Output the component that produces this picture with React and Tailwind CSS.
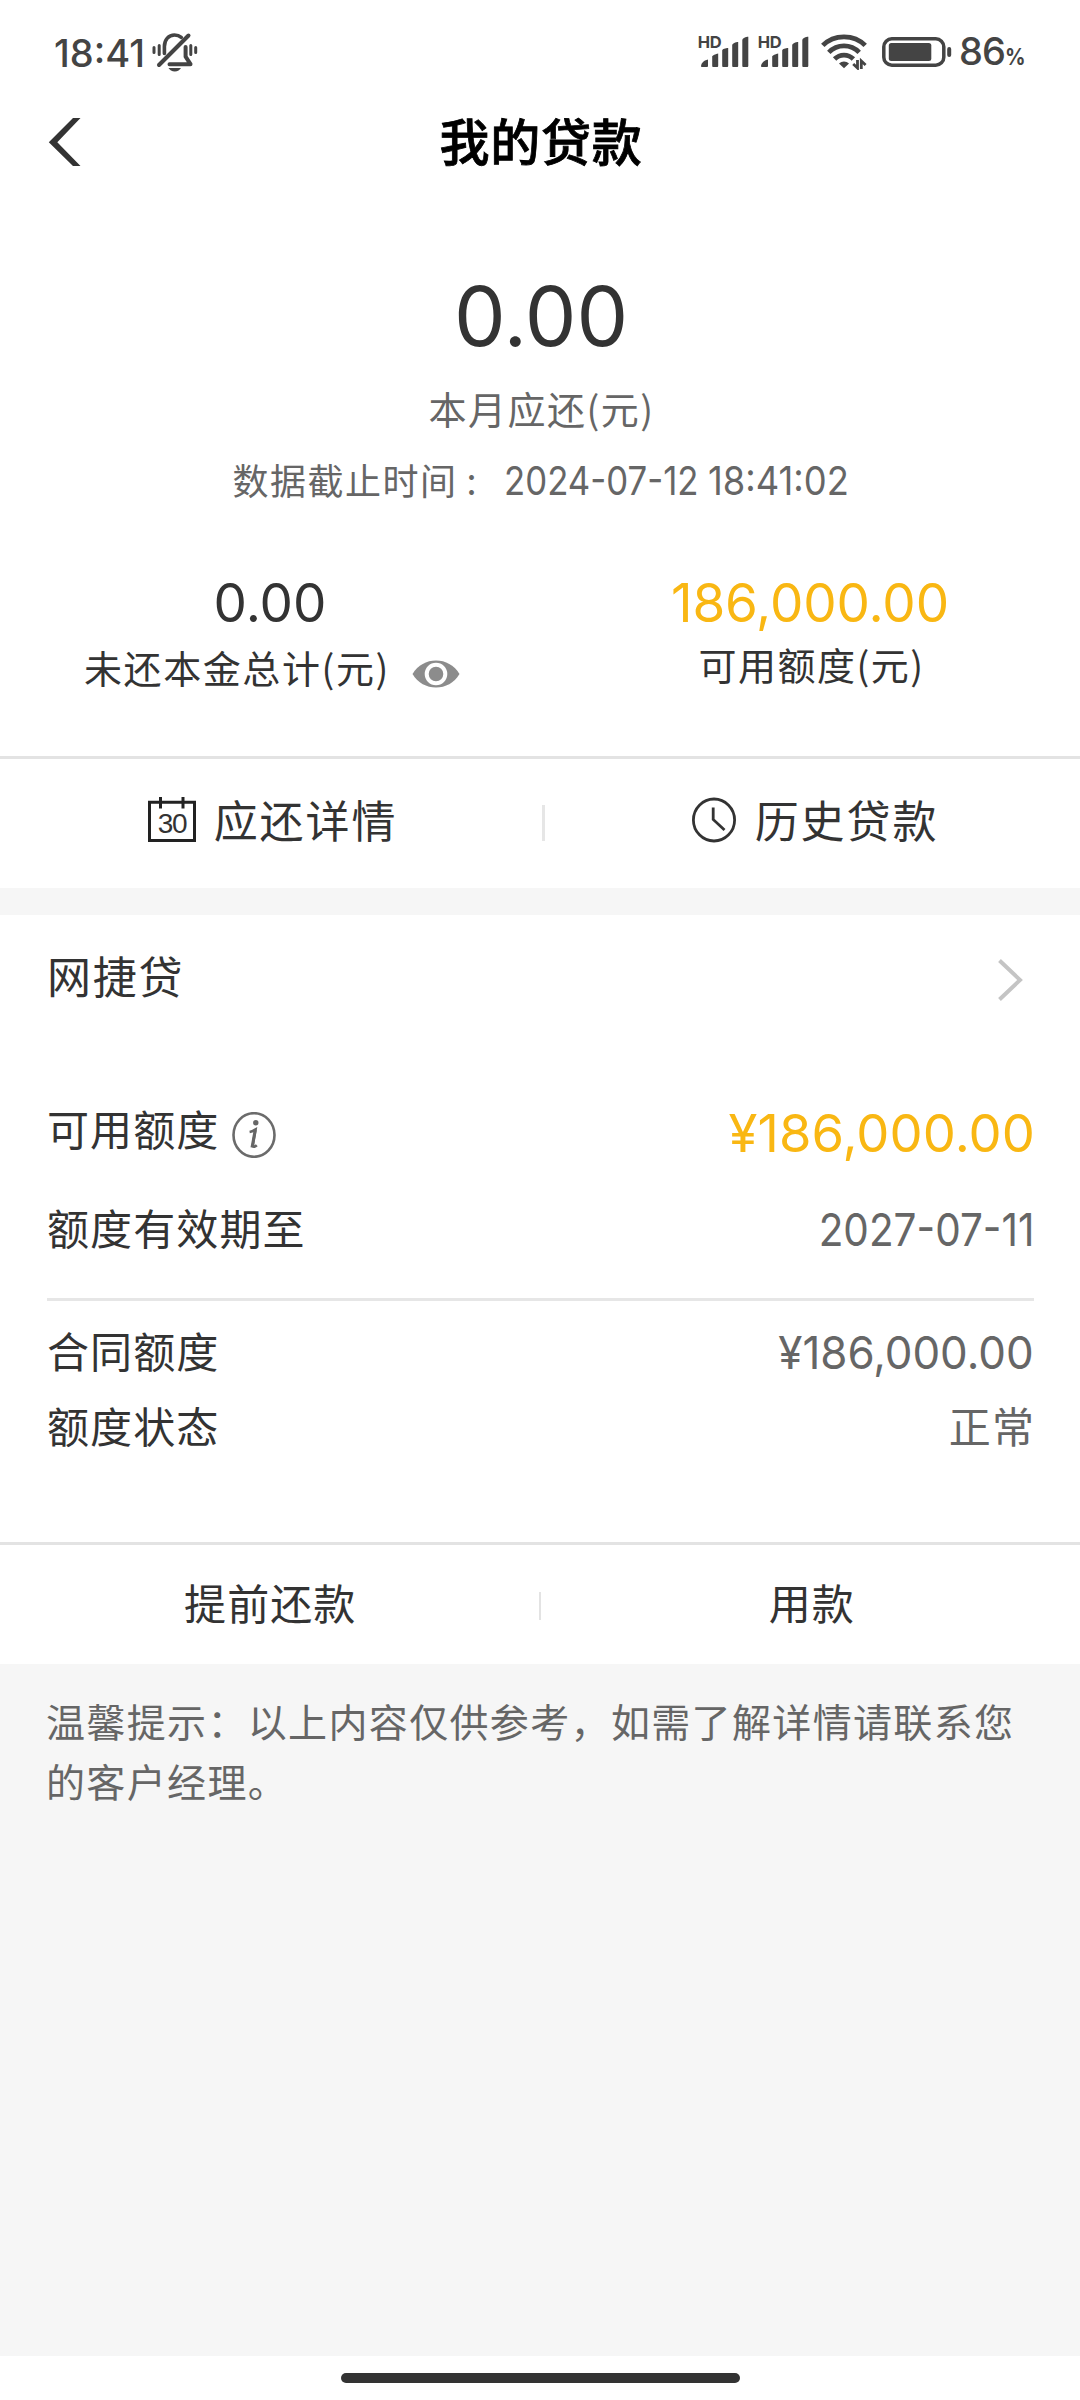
const CJK = "font-['Noto_Sans_CJK_SC',sans-serif]";
const NUM = "font-['Inter',sans-serif]";

function BellOff() {
  return (
    <svg className="h-[40px] w-[46px]" viewBox="0 0 46 40" fill="none" stroke="#444" strokeWidth="3.6" strokeLinecap="round">
      <path d="M2 15.500v5M7.200 13.500v9M38.800 13.500v9M43.700 15.500v5" strokeWidth="3" />
      <path d="M12.400 21.500v-7C12.400 7.500 16.800 3 22.500 3c2.800 0 5 .8 6.800 2.300" />
      <path d="M17.500 32.200H38.500l-4.900-7.500V15" strokeLinejoin="round" strokeWidth="4" />
      <path d="M36.500 3.500 7 33" strokeWidth="4" />
      <path d="M16.500 36h12.500c-1 2-3.400 3.400-6.200 3.400s-5.300-1.400-6.300-3.400z" fill="#444" stroke="none" />
    </svg>
  );
}

function Signal() {
  return (
    <svg className="h-[32px] w-[50px] overflow-visible" viewBox="0 0 50 32" fill="#444">
      <text x="-1.300" y="11.800" fontFamily="Inter, sans-serif" fontSize="16.500" fontWeight="700" letterSpacing="-0.400">HD</text>
      <path d="M2 30.500c0-3 2.500-6 7-7v6.300c0 .8-.5 1.200-1.200 1.200H3c-.6 0-1-.2-1-.5z" />
      <path d="M13.200 20.500c0-1 3.500-2.500 6-3v12.300c0 .8-.5 1.200-1.200 1.200h-3.600c-.8 0-1.200-.4-1.200-1.200z" />
      <path d="M23.200 14.500c0-1.500 3.500-2.500 6-2.500v17.800c0 .8-.5 1.200-1.200 1.200h-3.600c-.8 0-1.200-.4-1.200-1.200z" />
      <path d="M33.200 9c0-1.500 3.500-3 6-3v23.800c0 .8-.5 1.200-1.200 1.200h-3.600c-.8 0-1.200-.4-1.200-1.200z" />
      <path d="M43.300 4c0-1.800 3.500-3.300 6-3.300v29.100c0 .8-.5 1.200-1.200 1.200h-3.600c-.8 0-1.200-.4-1.200-1.200z" />
    </svg>
  );
}

function Wifi() {
  return (
    <svg className="h-[36px] w-[46px]" viewBox="0 0 46 36" fill="none" stroke="#444" strokeWidth="4.800">
      <path d="M1.800 11.400C13-.1 33-.1 44.200 11.400" />
      <path d="M7.800 18.400c8.500-8.600 21.900-8.600 30.400 0" />
      <path d="M13.600 25c5.300-5.300 13.500-5.300 18.800 0" />
      <path d="M18 29.500c2.800-2.800 7.200-2.800 10 0l-5 4.800z" fill="#444" stroke="none" />
      <path d="M36.500 26v8l-4.300-4M40.300 35V27l4.300 4" strokeWidth="2.800" />
    </svg>
  );
}

function Battery() {
  return (
    <svg className="h-[30px] w-[70px]" viewBox="0 0 70 30" fill="none">
      <rect x="1.800" y="1.800" width="60" height="26.400" rx="8" stroke="#444" strokeWidth="3.500" />
      <rect x="6.800" y="6" width="42.500" height="18" rx="2.500" fill="#444" />
      <rect x="65.200" y="10" width="4" height="10" rx="2" fill="#444" />
    </svg>
  );
}

function StatusBar() {
  return (
    <div className="flex h-[104px] items-center justify-between pl-[54px] pr-[57px] text-[#444]">
      <div className="flex items-center">
        <span className={`${NUM} mt-[1px] w-[98px] text-[38px] font-medium leading-[40px]`}>18:41</span>
        <BellOff />
      </div>
      <div className="flex items-center">
        <div className="flex gap-[10px]">
          <Signal />
          <Signal />
        </div>
        <span className="ml-[12px]"><Wifi /></span>
        <span className="ml-[15px]"><Battery /></span>
        <div className={`${NUM} ml-[7px] mt-[3px] flex w-[64px] items-baseline leading-[40px]`}>
          <span className="text-[38px] font-medium tracking-[-0.800px]">86</span>
          <span className="inline-block origin-left scale-x-[0.880] text-[23px] font-bold">%</span>
        </div>
      </div>
    </div>
  );
}

function Header() {
  return (
    <header className="grid h-[74px] grid-cols-[1fr_auto_1fr] items-center">
      <svg className="ml-[48px] mt-[2px] h-[48px] w-[33px]" viewBox="0 0 33 48" fill="#333">
        <path d="M25 0h7.500L9.300 24.200 32.500 48H25L.8 24.200z" />
      </svg>
      <h1 className={`${CJK} -mt-[5px] pl-[2px] text-[50px] font-medium leading-[72px] tracking-[0.700px] text-black [-webkit-text-stroke:0.800px_black]`}>我的贷款</h1>
    </header>
  );
}

function Summary() {
  return (
    <section className="flex h-[578px] flex-col items-center pt-[89px]">
      <div className={`${NUM} pl-[2px] text-[82px] leading-[100px] tracking-[-0.200px] text-[#333]`}>0.00</div>
      <div className={`${CJK} pl-[3px] text-[38px] leading-[82px] tracking-[1.500px] text-[#666]`}>本月应还(元)</div>
      <div className="mt-[1px] flex h-[56px] items-baseline whitespace-pre leading-[58px] text-[#666]">
        <span className={`${CJK} text-[36px] tracking-[1.500px]`}>数据截止时间</span>
        <span className={`${CJK} ml-[9px] w-[37px] text-[36px]`}>:</span>
        <span className={`${NUM} inline-block w-[204px] origin-left scale-x-[0.880] text-[39.500px]`}>2024-07-12</span>
        <span className={`${NUM} inline-block w-[140px] origin-left scale-x-[0.920] text-[39.500px]`}>18:41:02</span>
      </div>
      <div className="mt-[67px] grid w-full grid-cols-2 text-[#333]">
        <div className="flex flex-col items-center">
          <span className={`${NUM} text-[53px] leading-[60px]`}>0.00</span>
          <div className="mt-[2px] flex items-center pl-[4px]">
            <span className={`${CJK} text-[38px] leading-[64px] tracking-[1.600px]`}>未还本金总计(元)</span>
            <svg className="ml-[22px] mt-[14px] h-[28px] w-[48px]" viewBox="0 0 48 28">
              <path d="M.5 14C6 5 14.500.5 24 .5S42 5 47.500 14C42 23 33.500 27.500 24 27.500S6 23 .5 14z" fill="#8c8c8c" />
              <circle cx="24" cy="14" r="9.300" fill="#8c8c8c" stroke="#fff" strokeWidth="4" />
            </svg>
          </div>
        </div>
        <div className="flex flex-col items-center">
          <span className={`${NUM} text-[53px] leading-[60px] tracking-[-0.100px] text-[#f9b713]`}>186,000.00</span>
          <span className={`${CJK} -mt-[1px] pl-[3px] text-[38px] leading-[64px] tracking-[1.500px]`}>可用额度(元)</span>
        </div>
      </div>
    </section>
  );
}

function CalendarIcon() {
  return (
    <svg className="mt-[2px] h-[46px] w-[48px]" viewBox="0 0 48 46" fill="none" stroke="#222" strokeWidth="3">
      <path d="M1.500 5.300h45v38.200H1.500zM12.500 0v11.500M35 0v11.500" />
      <text x="24" y="36" textAnchor="middle" fontFamily="Liberation Sans, sans-serif" fontSize="28" letterSpacing="-1.200" fill="#333" stroke="none">30</text>
    </svg>
  );
}

function ClockIcon() {
  return (
    <svg className="mt-[2px] h-[46px] w-[45px]" viewBox="0 0 45 46" fill="none" stroke="#333" strokeWidth="2.800">
      <ellipse cx="22" cy="23" rx="20.600" ry="21" />
      <path d="M21.200 10.500V22.500L32.500 33" />
    </svg>
  );
}

function QuickLinks() {
  return (
    <nav className={`${CJK} flex h-[132px] items-center border-t-[3px] border-[#e3e3e3] pb-[9px] text-[44px] leading-[64px] tracking-[1.900px] text-[#333]`}>
      <div className="flex w-[542px] items-center justify-center gap-[18px] pl-[3px]">
        <CalendarIcon />
        <span>应还详情</span>
      </div>
      <div className="mt-[8px] h-[36px] w-[3px] bg-[#e6e6e6]" />
      <div className="flex flex-1 items-center justify-center gap-[18px] pl-[5px]">
        <ClockIcon />
        <span>历史贷款</span>
      </div>
    </nav>
  );
}

function LoanCard() {
  return (
    <section className={`${CJK} text-[42px] tracking-[1.100px] text-[#333]`}>
      <div className="flex h-[120px] items-center justify-between pl-[47px] pr-[57px]">
        <span className="text-[44px] tracking-[1.700px]">网捷贷</span>
        <svg className="mt-[9px] h-[42px] w-[25px]" viewBox="0 0 25 42" fill="none" stroke="#c4c4c4" strokeWidth="4">
          <path d="M1.500 1.500 22 21 1.500 40.500" />
        </svg>
      </div>
      <div className="ml-[47px] mr-[46px] pt-[47px]">
        <div className="flex h-[92px] items-center justify-between">
          <div className="flex items-center">
            <span className="-mt-[1px]">可用额度</span>
            <svg className="ml-[13px] mt-[14px] h-[46px] w-[44px]" viewBox="0 0 44 46">
              <ellipse cx="22" cy="23" rx="20.500" ry="21.800" fill="none" stroke="#6b6b6b" strokeWidth="2.600" />
              <circle cx="23.800" cy="10.800" r="2.700" fill="#666" />
              <path d="M17.600 20c2.300-.4 4-1.400 6-2.600-.8 5.500-2 10.500-2.600 15.500-.2 2.800 2 2 3.800.3" fill="none" stroke="#666" strokeWidth="2.600" />
              <path d="M23.200 18 20 35.500" stroke="#666" strokeWidth="3" />
            </svg>
          </div>
          <span className={`${NUM} -mr-[1px] mt-[11px] text-[52.500px] tracking-[0.100px] text-[#f9b713]`}>¥186,000.00</span>
        </div>
        <div className="flex h-[106px] items-center justify-between">
          <span className="-mt-[1px]">额度有效期至</span>
          <span className={`${NUM} mt-[7px] inline-block origin-right scale-x-[0.890] text-[45.500px] tracking-normal text-[#666]`}>2027-07-11</span>
        </div>
        <div className="mt-[18px] h-[3px] bg-[#e6e6e6]" />
        <div className="mt-[11px] flex h-[76px] items-center justify-between">
          <span className="-mt-[2px]">合同额度</span>
          <span className={`${NUM} mt-[6px] inline-block origin-right scale-x-[0.965] text-[45.500px] tracking-normal text-[#666]`}>¥186,000.00</span>
        </div>
        <div className="flex h-[74px] items-center justify-between">
          <span className="-mt-[1px]">额度状态</span>
          <span className="-mt-[1px] -mr-[1px] text-[#666]">正常</span>
        </div>
      </div>
      <div className="mt-[80px] flex h-[122px] items-center border-t-[3px] border-[#e3e3e3] pb-[6px] pl-[2px]">
        <span className="flex-1 text-center">提前还款</span>
        <span className="mt-[8px] h-[28px] w-[2px] bg-[#e3e3e3]" />
        <span className="flex-1 pl-[3px] text-center">用款</span>
      </div>
    </section>
  );
}

export default function App() {
  return (
    <div className="flex h-[2400px] w-[1080px] flex-col overflow-hidden bg-white">
      <StatusBar />
      <Header />
      <Summary />
      <QuickLinks />
      <div className="h-[27px] bg-[#f6f6f6]" />
      <LoanCard />
      <div className="flex-1 bg-[#f6f6f6] pl-[46px] pr-[38px] pt-[26px]">
        <p className={`${CJK} text-[39px] leading-[60px] tracking-[1.350px] text-[#666]`}>
          温馨提示：以上内容仅供参考，如需了解详情请联系您
          <br />
          的客户经理。
        </p>
      </div>
      <div className="flex h-[44px] justify-center pt-[17px]">
        <div className="h-[10px] w-[399px] rounded-full bg-[#333]" />
      </div>
    </div>
  );
}
